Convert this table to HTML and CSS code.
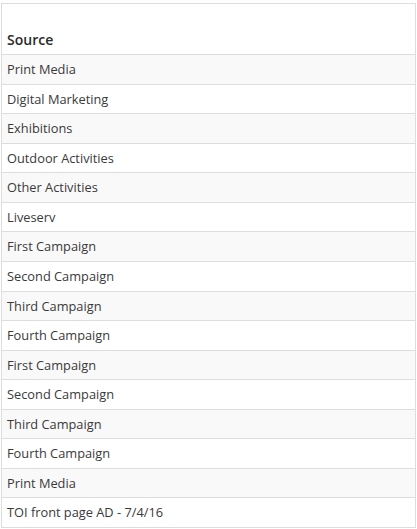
FILE: index.html
```html
<!DOCTYPE html>
<html>
<head>
<meta charset="utf-8">
<link rel="stylesheet" href="styles.css">
</head>
<body>
<div class="wrap">
<table class="grid">
<thead>
<tr><th>Source</th></tr>
</thead>
<tbody>
<tr><td>Print Media</td></tr>
<tr><td>Digital Marketing</td></tr>
<tr><td>Exhibitions</td></tr>
<tr><td>Outdoor Activities</td></tr>
<tr><td>Other Activities</td></tr>
<tr><td>Liveserv</td></tr>
<tr><td>First Campaign</td></tr>
<tr><td>Second Campaign</td></tr>
<tr><td>Third Campaign</td></tr>
<tr><td>Fourth Campaign</td></tr>
<tr><td>First Campaign</td></tr>
<tr><td>Second Campaign</td></tr>
<tr><td>Third Campaign</td></tr>
<tr><td>Fourth Campaign</td></tr>
<tr><td>Print Media</td></tr>
<tr><td>TOI front page AD - 7/4/16</td></tr>
</tbody>
</table>
</div>
</body>
</html>
```
FILE: styles.css
```css
html, body {
  margin: 0;
  padding: 0;
  background: #fff;
}
.wrap {
  padding: 3px 0 0 1px;
}
.grid {
  width: 415px;
  border-collapse: collapse;
  font-family: "Open Sans", "Liberation Sans", sans-serif;
  font-size: 12.8px;
  color: #3a3a3a;
  border-left: 1px solid #ddd;
  border-right: 1px solid #ddd;
}
.grid th {
  text-align: left;
  font-weight: 600;
  font-size: 14px;
  color: #2a2a2a;
  line-height: 19px;
  padding: 26px 5px 5px 5px;
  border-top: 1px solid #ddd;
  border-bottom: 1px solid #ddd;
}
.grid td {
  padding: 5px;
  line-height: 18.57px;
  border-top: 1px solid #ddd;
  border-bottom: 1px solid #ddd;
}
.grid tbody tr:nth-child(odd) td {
  background: #f9f9f9;
}
```
